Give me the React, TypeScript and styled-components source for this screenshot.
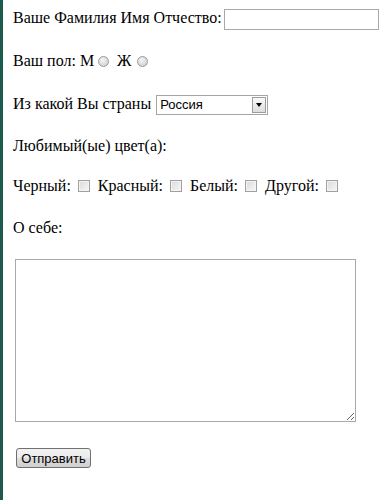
import React from 'react';
import styled, { createGlobalStyle } from 'styled-components';

const GlobalStyle = createGlobalStyle`
  html, body {
    margin: 0;
    padding: 0;
    background: #ffffff;
  }
  body {
    font-family: "Liberation Serif", "Times New Roman", serif;
    font-size: 16px;
    color: #000;
  }
`;

const Page = styled.div`
  min-height: 500px;
  box-sizing: border-box;
  border-left: 3px solid #1d5a4e;
  padding: 7px 0 0 10px;
`;

const Form = styled.form`
  display: flex;
  flex-direction: column;
  gap: 20px;
`;

const Row = styled.div<{ $height?: number; $shift?: number }>`
  height: ${(p) => p.$height ?? 22}px;
  line-height: ${(p) => p.$height ?? 22}px;
  margin-top: ${(p) => p.$shift ?? 0}px;
  white-space: nowrap;
`;

const TextInput = styled.input`
  box-sizing: border-box;
  width: 155px;
  height: 21px;
  border: 1px solid #a9a9a9;
  padding: 1px 3px;
  margin: 0 0 0 -2px;
  vertical-align: middle;
  font: 13px "Liberation Sans", Arial, sans-serif;
  outline: none;
`;

const Radio = styled.input.attrs({ type: 'radio' })`
  appearance: none;
  box-sizing: border-box;
  width: 11px;
  height: 11px;
  margin: 0 4px 0 4px;
  border-radius: 50%;
  border: 1px solid #9a9a9a;
  background: radial-gradient(circle at 40% 35%, #f4f4f4 0%, #d6d6d6 70%, #c4c4c4 100%);
  vertical-align: -1px;

  & + & {
    margin-left: 6px;
  }
`;

const Check = styled.input.attrs({ type: 'checkbox' })`
  appearance: none;
  box-sizing: border-box;
  width: 12px;
  height: 12px;
  margin: 0 4px 0 7px;
  border: 1px solid #a0a0a0;
  background: linear-gradient(135deg, #d9d9d9 0%, #ececec 60%, #f6f6f6 100%);
  box-shadow: inset 0 0 0 1px #f4f4f4;
  vertical-align: -1px;
`;

const SelectBox = styled.span`
  display: inline-flex;
  box-sizing: border-box;
  width: 112px;
  height: 20px;
  margin-left: 5px;
  border: 1px solid #a5a5a5;
  vertical-align: middle;
  background: #fff;
`;

const Select = styled.select`
  flex: 1;
  min-width: 0;
  appearance: none;
  border: none;
  outline: none;
  background: transparent;
  padding: 0 0 0 3px;
  margin: 0;
  font: 13px "Liberation Sans", Arial, sans-serif;
  color: #000;
  line-height: 18px;
`;

const Arrow = styled.span`
  box-sizing: border-box;
  width: 14px;
  height: 16px;
  margin: 1px 1px 1px 0;
  border: 1px solid #9c9c9c;
  background: linear-gradient(#fafafa, #dcdcdc);
  display: flex;
  align-items: center;
  justify-content: center;
`;

const Triangle = styled.span`
  width: 0;
  height: 0;
  border-left: 3.5px solid transparent;
  border-right: 3.5px solid transparent;
  border-top: 4px solid #000;
`;

const Area = styled.textarea`
  box-sizing: border-box;
  width: 341px;
  height: 163px;
  margin: 0 0 0 2px;
  border: 1px solid #a9a9a9;
  resize: both;
  outline: none;
  display: block;
  font: 13px "Liberation Mono", monospace;
`;

const Button = styled.button`
  box-sizing: border-box;
  width: 75px;
  height: 20px;
  margin: 6px 0 0 3px;
  padding: 0 4px;
  border: 1px solid #707070;
  border-radius: 3px;
  background: linear-gradient(#f2f2f2 0%, #ebebeb 50%, #dddddd 51%, #cfcfcf 100%);
  font: 13px "Liberation Sans", Arial, sans-serif;
  color: #000;
  align-self: flex-start;
`;

export default function App() {
  return (
    <Page>
      <GlobalStyle />
      <Form onSubmit={(e) => e.preventDefault()}>
        <Row>
          Ваше Фамилия Имя Отчество: <TextInput type="text" />
        </Row>
        <Row $shift={1}>
          Ваш пол: М<Radio name="sex" /> Ж<Radio name="sex" />
        </Row>
        <Row $shift={1}>
          Из какой Вы страны
          <SelectBox>
            <Select defaultValue="ru">
              <option value="ru">Россия</option>
            </Select>
            <Arrow>
              <Triangle />
            </Arrow>
          </SelectBox>
        </Row>
        <Row>Любимый(ые) цвет(а):</Row>
        <Row $shift={-2}>
          Черный:<Check /> Красный:<Check /> Белый:<Check /> Другой:<Check />
        </Row>
        <Row>О себе:</Row>
        <Area />
        <Button type="submit">Отправить</Button>
      </Form>
    </Page>
  );
}
